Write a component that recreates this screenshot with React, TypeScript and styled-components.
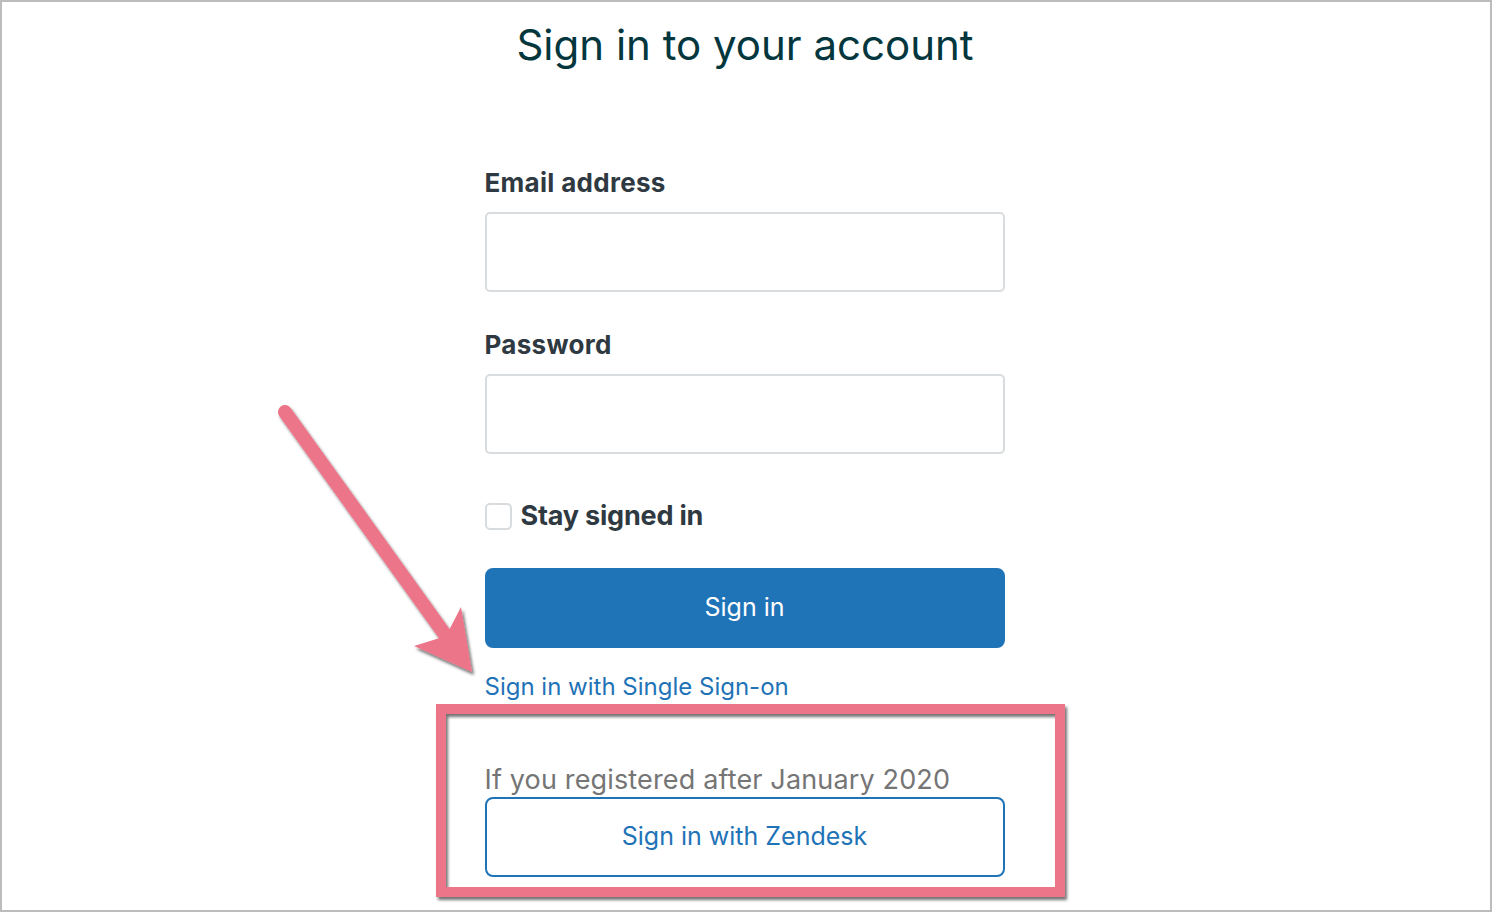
import React from "react";
import styled, { createGlobalStyle } from "styled-components";

const Global = createGlobalStyle`
  html, body { margin: 0; padding: 0; background: #fff; }
  body { font-family: Inter, "Noto Sans", sans-serif; }
  * { box-sizing: border-box; }
`;

const Frame = styled.div`
  position: relative;
  width: 1492px;
  height: 912px;
  border: 2px solid #bcbcbc;
  overflow: hidden;
  display: flex;
  flex-direction: column;
  align-items: center;
`;

const Title = styled.h1`
  margin: 17px 0 0 -2px;
  font-size: 42px;
  line-height: 52px;
  font-weight: 400;
  color: #03363d;
`;

const Form = styled.form`
  width: 520px;
  margin: 97px 0 0 -3px;
  display: flex;
  flex-direction: column;
`;

const Label = styled.label`
  font-size: 26px;
  line-height: 30px;
  font-weight: 700;
  letter-spacing: 0.3px;
  color: #2f3941;
  margin-bottom: 14px;
`;

const Input = styled.div`
  height: 80px;
  border: 2px solid #d8dcde;
  border-radius: 5px;
  background: #fff;
  margin-bottom: 38px;
`;

const CheckRow = styled.div`
  display: flex;
  align-items: center;
  gap: 9px;
  margin-top: 8px;
`;

const Box = styled.span`
  width: 27px;
  height: 27px;
  border: 2px solid #d8dcde;
  border-radius: 5px;
`;

const CheckText = styled.span`
  font-size: 27px;
  line-height: 32px;
  font-weight: 700;
  letter-spacing: -0.2px;
  color: #2f3941;
`;

const Button = styled.button<{ $outline?: boolean }>`
  height: 80px;
  width: 100%;
  border-radius: 8px;
  font-family: inherit;
  font-size: 25px;
  font-weight: 400;
  padding: 0 0 3px 0;
  cursor: pointer;
  border: 2px solid #1f73b7;
  background: ${(p) => (p.$outline ? "#fff" : "#1f73b7")};
  color: ${(p) => (p.$outline ? "#1f73b7" : "#fff")};
`;

const PrimaryButton = styled(Button)`
  margin-top: 36px;
`;

const Link = styled.a`
  margin-top: 24px;
  font-size: 24px;
  line-height: 30px;
  color: #1f73b7;
  text-decoration: none;
`;

const Note = styled.p`
  margin: 62px 0 1px 0;
  font-size: 27px;
  line-height: 32px;
  letter-spacing: 0.15px;
  color: #757575;
`;

const Overlay = styled.svg`
  position: absolute;
  left: -2px;
  top: -2px;
  pointer-events: none;
`;

export default function App() {
  return (
    <>
      <Global />
      <Frame>
        <Title>Sign in to your account</Title>
        <Form onSubmit={(e) => e.preventDefault()}>
          <Label>Email address</Label>
          <Input />
          <Label>Password</Label>
          <Input />
          <CheckRow>
            <Box />
            <CheckText>Stay signed in</CheckText>
          </CheckRow>
          <PrimaryButton>Sign in</PrimaryButton>
          <Link href="#">Sign in with Single Sign-on</Link>
          <Note>If you registered after January 2020</Note>
          <Button $outline>Sign in with Zendesk</Button>
        </Form>
        <Overlay width="1492" height="912" viewBox="0 0 1492 912">
          <defs>
            <filter id="sh" x="-20%" y="-20%" width="140%" height="140%">
              <feDropShadow dx="2" dy="3" stdDeviation="1.6" floodColor="#000" floodOpacity="0.55" />
            </filter>
          </defs>
          <g filter="url(#sh)">
            <line x1="285" y1="412" x2="446" y2="636" stroke="#ec7589" strokeWidth="14" strokeLinecap="round" />
            <polygon points="472,672 414,646 446,636 461,607" fill="#ec7589" />
            <rect x="441" y="709" width="619" height="183" fill="none" stroke="#ec7589" strokeWidth="10" />
          </g>
        </Overlay>
      </Frame>
    </>
  );
}
